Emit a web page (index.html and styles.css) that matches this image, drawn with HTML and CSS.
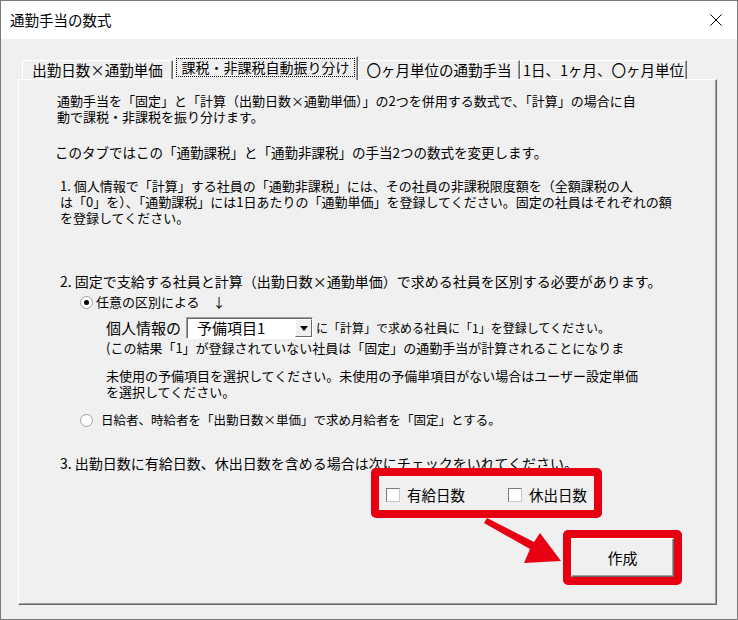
FILE: index.html
```html
<!DOCTYPE html>
<html lang="ja">
<head>
    <meta charset="UTF-8">
    <meta name="viewport" content="width=device-width, initial-scale=1.0">
    <title>通勤手当の数式</title>
    <link rel="stylesheet" href="styles.css">
</head>
<body>
    <div class="window">
        <header class="titlebar">
            <span class="title">通勤手当の数式</span>
            <svg class="close" width="12" height="12" viewBox="0 0 12 12">
                <path d="M0.5 0.5L11.5 11.5M11.5 0.5L0.5 11.5" stroke="#000" stroke-width="1"/>
            </svg>
        </header>
        <main class="dialog">
            <nav class="tabs">
                <div class="tab tab-1">出勤日数×通勤単価</div>
                <div class="tab tab-2 active"><span class="focus">課税・非課税自動振り分け</span></div>
                <div class="tab tab-3">〇ヶ月単位の通勤手当</div>
                <div class="tab tab-4">1日、1ヶ月、〇ヶ月単位</div>
            </nav>
            <section class="panel">
                <p class="desc">通勤手当を「固定」と「計算（出勤日数×通勤単価）」の2つを併用する数式で、「計算」の場合に自<br>動で課税・非課税を振り分けます。</p>
                <p class="note">このタブではこの「通勤課税」と「通勤非課税」の手当2つの数式を変更します。</p>

                <p class="step step-1">1. 個人情報で「計算」する社員の「通勤非課税」には、その社員の非課税限度額を（全額課税の人<br>は「0」を）、「通勤課税」には1日あたりの「通勤単価」を登録してください。固定の社員はそれぞれの額<br>を登録してください。</p>

                <p class="step step-2">2. 固定で支給する社員と計算（出勤日数×通勤単価）で求める社員を区別する必要があります。</p>
                <div class="radio-row">
                    <span class="radio checked"></span>
                    <span>任意の区別による　↓</span>
                </div>
                <div class="combo-row">
                    <span class="lbl-lg">個人情報の</span>
                    <div class="combo">
                        <span class="combo-value">予備項目1</span>
                        <span class="combo-btn">
                            <svg width="8" height="5" viewBox="0 0 8 5"><path d="M0 0H8L4 5Z" fill="#000"/></svg>
                        </span>
                    </div>
                    <span class="lbl-sm">に「計算」で求める社員に「1」を登録してください。</span>
                </div>
                <p class="indent result">(この結果「1」が登録されていない社員は「固定」の通勤手当が計算されることになりま</p>
                <p class="indent hint">未使用の予備項目を選択してください。未使用の予備単項目がない場合はユーザー設定単価<br>を選択してください。</p>
                <div class="radio-row second">
                    <span class="radio"></span>
                    <span>日給者、時給者を「出勤日数×単価」で求め月給者を「固定」とする。</span>
                </div>

                <p class="step step-3">3. 出勤日数に有給日数、休出日数を含める場合は次にチェックをいれてください。</p>
                <div class="checks">
                    <label class="check"><span class="box"></span>有給日数</label>
                    <label class="check"><span class="box"></span>休出日数</label>
                </div>
                <div class="actions">
                    <button class="btn" type="button">作成</button>
                </div>

                <!-- red annotations -->
                <div class="mark mark-checks"></div>
                <div class="mark mark-btn"></div>
                <svg class="arrow" width="110" height="60" viewBox="0 0 110 60">
                    <polygon points="27,8 24,13 70,39 64,53 101,51 80,23 74,32" fill="#e60012"/>
                </svg>
            </section>
        </main>
    </div>
</body>
</html>
```

FILE: styles.css
```css
*{
    margin: 0;
    padding: 0;
    box-sizing: border-box;
}
body{
    width: 738px;
    height: 620px;
    overflow: hidden;
    background-color: #f0f0f0;
    font-family: "Noto Sans CJK JP", "Noto Sans", sans-serif;
    color: #000;
}
.window{
    width: 738px;
    height: 620px;
    border: 1px solid #7a7a7a;
    background-color: #f0f0f0;
}
.titlebar{
    height: 38px;
    background-color: #fff;
    display: flex;
    align-items: center;
    justify-content: space-between;
    padding: 0 15px 0 9px;
}
.title{
    font-size: 14.5px;
    line-height: 18px;
}
.dialog{
    padding: 17px 0 0 17px;
}

/* tabs */
.tabs{
    display: flex;
    align-items: flex-end;
    height: 23px;
    padding-left: 4px;
}
.tab{
    height: 19px;
    font-size: 14.5px;
    line-height: 18px;
    text-align: center;
    white-space: nowrap;
    border-top: 1px solid #fff;
    border-left: 1px solid #fff;
    border-right: 1px solid #696969;
    box-shadow: inset -1px 0 0 #a0a0a0;
}
.tab-1{ width: 151px; }
.tab-2{ width: 185px; }
.tab-3{ width: 162px; }
.tab-4{ width: 167px; }
.tab.active{
    position: relative;
    z-index: 1;
    height: 24px;
    margin-bottom: -1px;
    padding: 1px 2px 0 2px;
    background-color: #f0f0f0;
}
.focus{
    display: block;
    border: 1px dotted #000;
    line-height: 17px;
    font-size: 14px;
}

/* panel */
.panel{
    position: relative;
    width: 699px;
    height: 526px;
    border-top: 1px solid #fff;
    border-left: 1px solid #fff;
    border-right: 1px solid #696969;
    border-bottom: 1px solid #696969;
    box-shadow: inset -1px -1px 0 #a0a0a0;
    padding: 13px 0 0 38px;
}
.desc{
    font-size: 13px;
    line-height: 16px;
}
.note{
    font-size: 13.5px;
    line-height: 18px;
    margin: 18px 0 0 -2px;
}
.step{
    margin-left: 3px;
}
.step-1{
    font-size: 13px;
    line-height: 16px;
    margin-top: 17px;
}
.step-2{
    font-size: 14px;
    line-height: 18px;
    margin-top: 46px;
}
.step-3{
    font-size: 14px;
    line-height: 18px;
    margin-top: 25px;
}
.radio-row{
    display: flex;
    align-items: center;
    gap: 3px;
    font-size: 13px;
    line-height: 18px;
    margin: 3px 0 0 23px;
}
.radio-row.second{
    margin-top: 11px;
    gap: 8px;
    font-size: 12.5px;
}
.radio{
    position: relative;
    width: 13px;
    height: 13px;
    border-radius: 50%;
    border: 1px solid #a0a0a0;
    background-color: #fff;
}
.radio.checked::after{
    content: "";
    position: absolute;
    left: 3px;
    top: 3px;
    width: 5px;
    height: 5px;
    border-radius: 50%;
    background-color: #000;
}
.combo-row{
    display: flex;
    align-items: center;
    height: 22px;
    margin: 6px 0 0 49px;
}
.lbl-lg{
    width: 80px;
    font-size: 15px;
    line-height: 18px;
}
.combo{
    width: 127px;
    height: 22px;
    display: flex;
    background-color: #fff;
    border: 1px solid;
    border-color: #a0a0a0 #fff #fff #a0a0a0;
    box-shadow: inset 1px 1px 0 #696969;
}
.combo-value{
    flex: 1;
    font-size: 15px;
    line-height: 19px;
    padding-left: 10px;
}
.combo-btn{
    width: 17px;
    margin: 1px 0 1px 0;
    display: flex;
    align-items: center;
    justify-content: center;
    background-color: #f0f0f0;
    border: 1px solid;
    border-color: #fff #696969 #696969 #fff;
}
.lbl-sm{
    font-size: 12px;
    line-height: 16px;
    margin-left: 3px;
}
.indent{
    margin-left: 49px;
}
.result{
    font-size: 13px;
    line-height: 18px;
}
.hint{
    font-size: 13px;
    line-height: 16px;
    margin-top: 11px;
}

/* checks + button */
.checks{
    display: flex;
    align-items: center;
    height: 16px;
    margin: 15px 0 0 329px;
}
.check{
    display: flex;
    align-items: center;
    gap: 7px;
    font-size: 14.5px;
    line-height: 16px;
}
.check + .check{
    margin-left: 43px;
}
.box{
    width: 14px;
    height: 14px;
    background-color: #fff;
    border: 1px solid;
    border-color: #7a7a7a #c8c8c8 #c8c8c8 #7a7a7a;
}
.actions{
    margin: 35px 0 0 514px;
}
.btn{
    width: 103px;
    height: 39px;
    font-family: inherit;
    font-size: 15px;
    background-color: #f0f0f0;
    border: 1px solid;
    border-color: #fff #696969 #696969 #fff;
    box-shadow: inset -1px -1px 0 #a0a0a0;
}

/* annotation overlay */
.mark{
    position: absolute;
    border: 8px solid #e60012;
    border-radius: 5px;
}
.mark-checks{
    left: 352px;
    top: 388px;
    width: 231px;
    height: 50px;
}
.mark-btn{
    left: 544px;
    top: 450px;
    width: 119px;
    height: 55px;
}
.arrow{
    position: absolute;
    left: 441px;
    top: 430px;
}
```
